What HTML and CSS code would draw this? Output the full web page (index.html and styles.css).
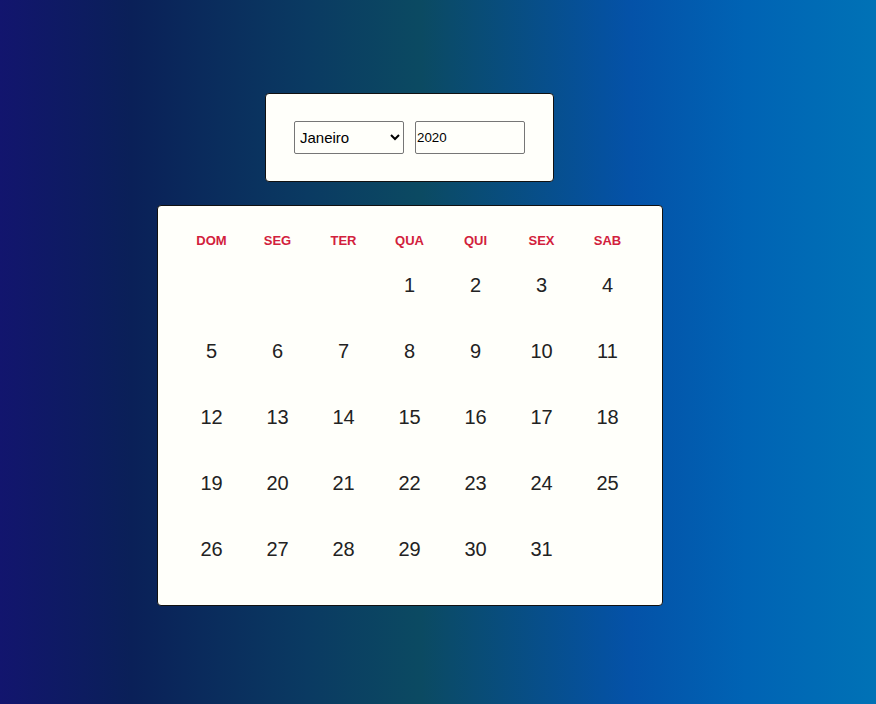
FILE: index.html
```html
<!DOCTYPE html>
<html lang="pt-BR">
<head>
<meta charset="utf-8">
<title>Calendário</title>
<link rel="stylesheet" href="styles.css">
</head>
<body>
<main class="page">
  <section class="controls">
    <select class="month">
      <option selected>Janeiro</option>
      <option>Fevereiro</option>
      <option>Março</option>
      <option>Abril</option>
      <option>Maio</option>
      <option>Junho</option>
      <option>Julho</option>
      <option>Agosto</option>
      <option>Setembro</option>
      <option>Outubro</option>
      <option>Novembro</option>
      <option>Dezembro</option>
    </select>
    <input class="year" type="text" value="2020">
  </section>
  <section class="calendar">
    <div class="head">DOM</div><div class="head">SEG</div><div class="head">TER</div><div class="head">QUA</div><div class="head">QUI</div><div class="head">SEX</div><div class="head">SAB</div>
    <div class="day"></div><div class="day"></div><div class="day"></div><div class="day">1</div><div class="day">2</div><div class="day">3</div><div class="day">4</div>
    <div class="day">5</div><div class="day">6</div><div class="day">7</div><div class="day">8</div><div class="day">9</div><div class="day">10</div><div class="day">11</div>
    <div class="day">12</div><div class="day">13</div><div class="day">14</div><div class="day">15</div><div class="day">16</div><div class="day">17</div><div class="day">18</div>
    <div class="day">19</div><div class="day">20</div><div class="day">21</div><div class="day">22</div><div class="day">23</div><div class="day">24</div><div class="day">25</div>
    <div class="day">26</div><div class="day">27</div><div class="day">28</div><div class="day">29</div><div class="day">30</div><div class="day">31</div><div class="day"></div>
  </section>
</main>
</body>
</html>
```
FILE: styles.css
```css
html, body {
  margin: 0;
  height: 100%;
}
body {
  font-family: "Liberation Sans", Arial, sans-serif;
  background: linear-gradient(to right, #12156e 0%, #0a2058 15%, #0a3a62 35%, #0b4a62 48%, #0452a8 72%, #0063b4 85%, #0072b6 100%);
}
.page {
  display: flex;
  flex-direction: column;
  align-items: center;
  padding-top: 93px;
  padding-right: 57px;
  gap: 23px;
}
.controls {
  display: flex;
  gap: 11px;
  padding: 27px 28px;
  background: #fffffa;
  border: 1px solid #111;
  border-radius: 4px;
}
.month, .year {
  box-sizing: border-box;
  width: 110px;
  height: 33px;
  margin: 0;
  font-family: "Liberation Sans", Arial, sans-serif;
  color: #000;
  background: #fffffa;
  border: 1px solid #767676;
  border-radius: 2px;
}
.month {
  padding: 0 1px;
  font-size: 15px;
}
.year {
  padding: 0 1px;
  font-size: 13.33px;
}
.calendar {
  display: grid;
  grid-template-columns: repeat(7, 66px);
  grid-auto-rows: 66px;
  grid-template-rows: 26px;
  padding: 20px 21px 23px 21px;
  background: #fffffa;
  border: 1px solid #111;
  border-radius: 4px;
}
.head {
  display: flex;
  align-items: center;
  justify-content: center;
  padding-top: 2px;
  font-size: 13px;
  font-weight: bold;
  color: #d2213c;
}
.day {
  display: flex;
  align-items: center;
  justify-content: center;
  font-size: 20px;
  color: #222;
}
```
